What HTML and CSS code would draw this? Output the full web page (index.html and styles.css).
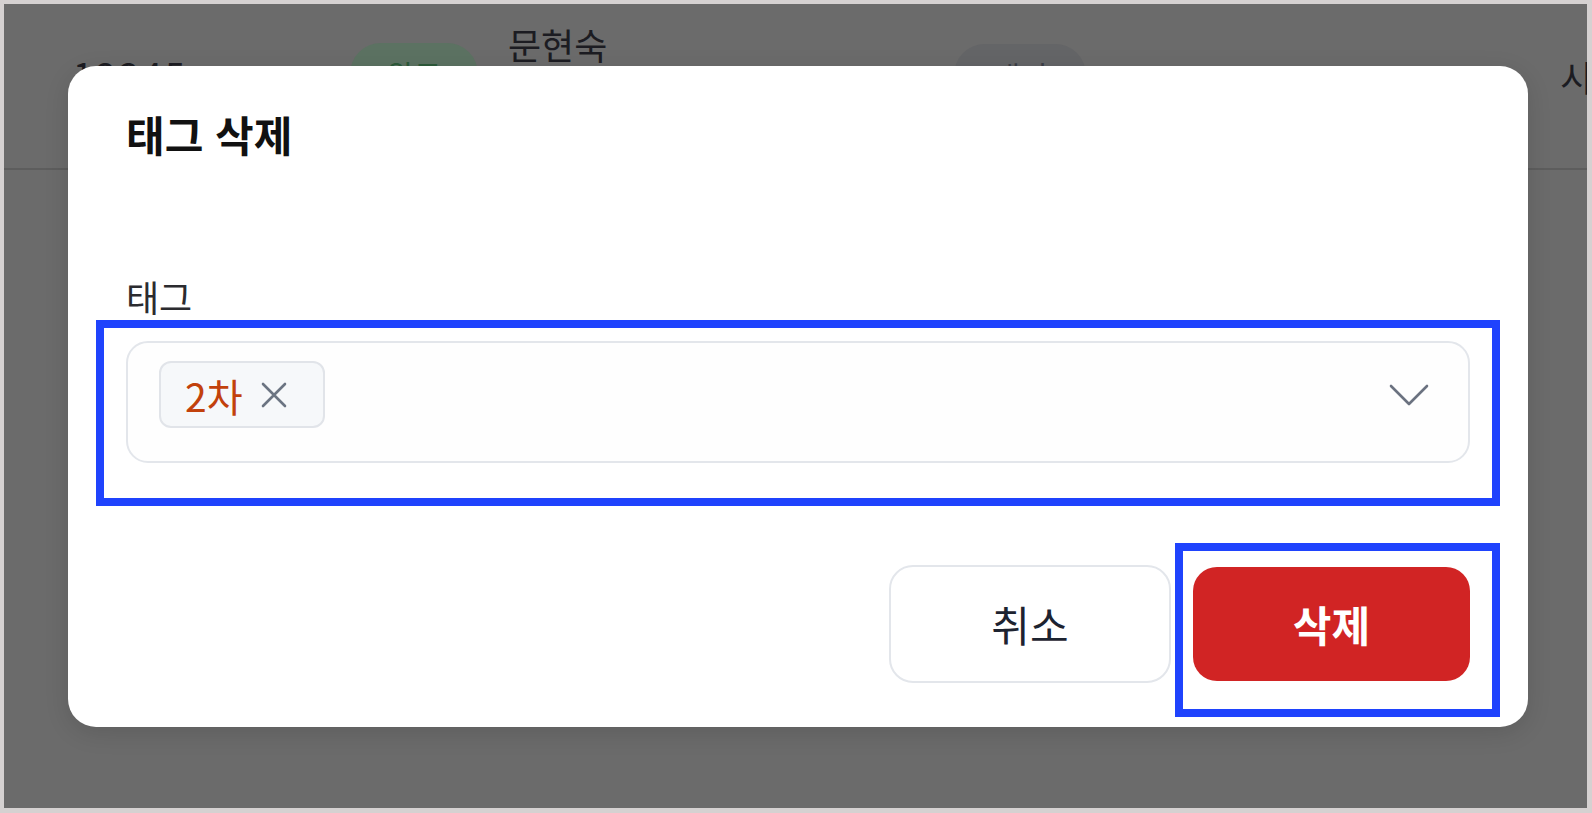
FILE: index.html
```html
<!DOCTYPE html>
<html lang="ko">
<head>
<meta charset="utf-8">
<title>태그 삭제</title>
<link rel="stylesheet" href="styles.css">
</head>
<body>
<div class="frame">
  <div class="screen">
    <div class="bg-row">
      <div class="cell cell-id">12345</div>
      <div class="cell cell-status"><span class="pill pill-green">완료</span></div>
      <div class="cell cell-name">문현숙</div>
      <div class="cell cell-state"><span class="pill pill-gray">대기</span></div>
      <div class="cell cell-last">시</div>
    </div>

    <div class="dialog">
      <h2 class="dialog-title">태그 삭제</h2>
      <div class="field-label">태그</div>
      <div class="select">
        <div class="select-row">
          <span class="chip">
            <span class="chip-text">2차</span>
            <svg class="chip-x" viewBox="0 0 28 28" width="28" height="28" aria-hidden="true">
              <path d="M3 3 L25 25 M25 3 L3 25" fill="none" stroke="#6b7482" stroke-width="2.6" stroke-linecap="round"/>
            </svg>
          </span>
          <svg class="chevron" viewBox="0 0 40 24" width="40" height="24" aria-hidden="true">
            <path d="M2 3 L20 21 L38 3" fill="none" stroke="#6b7280" stroke-width="2.6" stroke-linecap="round" stroke-linejoin="round"/>
          </svg>
        </div>
      </div>
      <div class="actions">
        <button class="btn btn-cancel">취소</button>
        <button class="btn btn-delete">삭제</button>
      </div>
    </div>

    <div class="mark mark-select"></div>
    <div class="mark mark-delete"></div>
  </div>
</div>
</body>
</html>
```

FILE: styles.css
```css
* { box-sizing: border-box; }

html, body {
  margin: 0;
  padding: 0;
  width: 1592px;
  height: 813px;
  overflow: hidden;
  font-family: "Noto Sans CJK KR", "Noto Sans", sans-serif;
}

.frame {
  width: 1592px;
  height: 813px;
  background: #d5d1d1;
  padding: 4px 5px 5px 4px;
}

.screen {
  position: relative;
  width: 100%;
  height: 100%;
  background: #6b6b6b;
  overflow: hidden;
}

/* dimmed background table row */
.bg-row {
  display: grid;
  grid-template-columns: 277px 158px 446px 606px 1fr;
  padding-left: 69px;
  height: 166px;
  border-bottom: 2px solid #5d5d5d;
  align-items: start;
  color: #1c1c22;
  font-size: 36px;
  line-height: 42px;
  white-space: nowrap;
}

.cell-id { padding-top: 48px; letter-spacing: 3px; }
.cell-status { padding-top: 39px; }
.cell-name { padding-top: 19px; }
.cell-state { padding-top: 40px; }
.cell-last { padding-top: 51px; }

.pill {
  display: inline-flex;
  align-items: center;
  justify-content: center;
  width: 128px;
  height: 62px;
  border-radius: 31px;
  font-size: 30px;
}

.pill-green { background: #5c7262; color: #2d5a3a; }
.pill-gray { background: #646567; color: #3b3e46; width: 132px; }

/* dialog */
.dialog {
  position: absolute;
  left: 64px;
  top: 62px;
  width: 1460px;
  height: 661px;
  background: #ffffff;
  border-radius: 28px;
  padding: 44px 58px 44px;
  box-shadow: 0 6px 24px rgba(0, 0, 0, 0.12);
}

.dialog-title {
  margin: 0;
  font-size: 42px;
  line-height: 48px;
  font-weight: 700;
  color: #111111;
}

.field-label {
  margin-top: 118px;
  font-size: 36px;
  line-height: 40px;
  color: #2b2b2f;
}

.select {
  margin-top: 25px;
  height: 122px;
  border: 2px solid #e3e6eb;
  border-radius: 22px;
  background: #fefefe;
  padding: 18px 39px 0 31px;
}

.select-row {
  display: flex;
  align-items: center;
  justify-content: space-between;
}

.chip {
  display: inline-flex;
  align-items: center;
  height: 67px;
  width: 166px;
  padding-left: 24px;
  background: #f6f8fa;
  border: 2px solid #e1e4e9;
  border-radius: 12px;
}

.chip-text {
  font-size: 39px;
  line-height: 46px;
  color: #c2410c;
}

.chip-x {
  margin-left: 17px;
}

.chevron {
  display: block;
}

.actions {
  margin-top: 102px;
  display: flex;
  justify-content: flex-end;
  align-items: center;
  gap: 22px;
}

.btn {
  font-family: inherit;
  font-size: 42px;
  line-height: 48px;
  border-radius: 24px;
  cursor: pointer;
  display: inline-flex;
  align-items: center;
  justify-content: center;
}

.btn-cancel {
  width: 282px;
  height: 118px;
  background: #ffffff;
  border: 2px solid #e3e6eb;
  color: #1d2330;
}

.btn-delete {
  width: 277px;
  height: 114px;
  background: #d12424;
  border: none;
  color: #ffffff;
  font-weight: 700;
}

/* blue annotation frames */
.mark {
  position: absolute;
  border: 8px solid #1f43fd;
  pointer-events: none;
}

.mark-select {
  left: 92px;
  top: 316px;
  width: 1404px;
  height: 186px;
}

.mark-delete {
  left: 1171px;
  top: 539px;
  width: 325px;
  height: 174px;
}
```
